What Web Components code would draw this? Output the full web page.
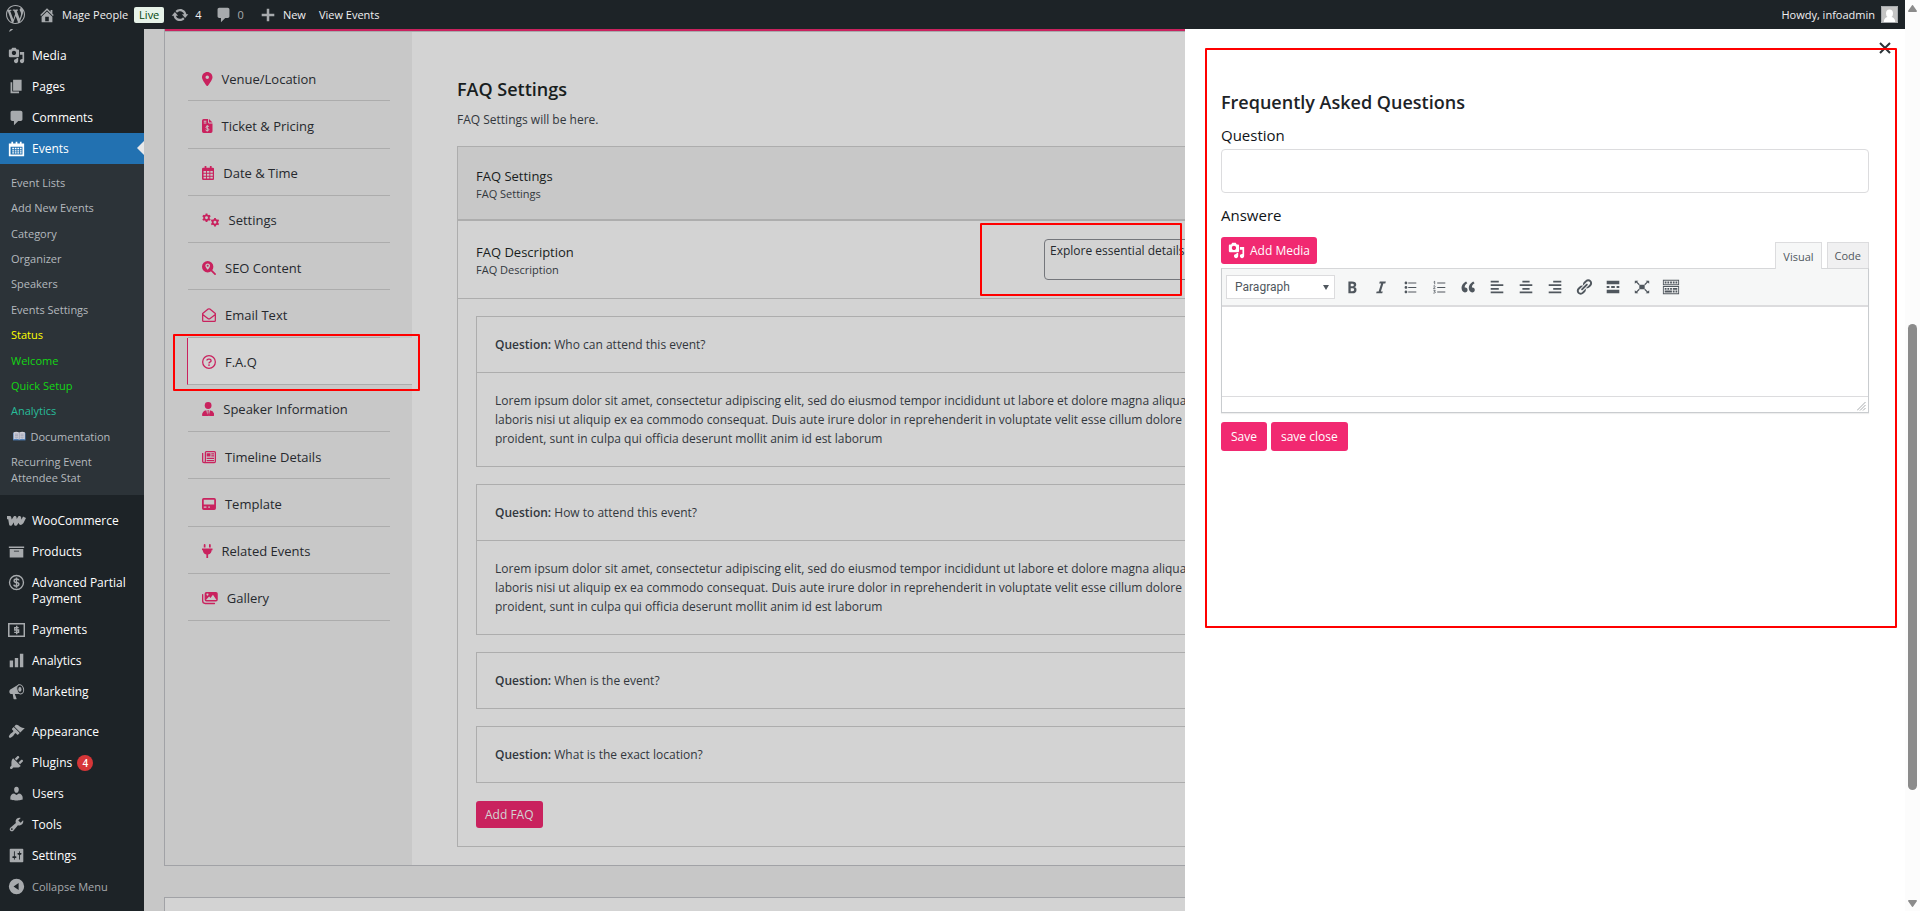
<!DOCTYPE html>
<html lang="en">
<head>
<meta charset="utf-8">
<title>Edit Event</title>
<style>
html,body{margin:0;height:100%;overflow:hidden}
body{font-family:"Open Sans","Noto Sans",sans-serif;font-size:12px;color:#1d2327;background:#c7c7c7}
</style>
</head>
<body>
<app-shell></app-shell>
<script>
const gear=(x,y,r)=>`<g fill="none" stroke="currentColor"><circle cx="${x}" cy="${y}" r="${r}" stroke-width="${r*.75}"/>${[0,60,120].map(a=>`<path transform="rotate(${a} ${x} ${y})" stroke-width="${r*.8}" d="M${x} ${y-r*1.85}V${y-r}M${x} ${y+r}V${y+r*1.85}"/>`).join('')}</g>`;
const ICONS={
wordpress:[20,20,'<path d="M20 10c0-5.51-4.49-10-10-10C4.48 0 0 4.49 0 10c0 5.52 4.48 10 10 10 5.51 0 10-4.48 10-10zM7.78 15.37L4.37 6.22c.55-.02 1.17-.08 1.17-.08.5-.06.44-1.13-.06-1.11 0 0-1.45.11-2.37.11-.18 0-.37 0-.58-.01C4.12 2.69 6.87 1.11 10 1.11c2.33 0 4.45.87 6.05 2.34-.68-.11-1.65.39-1.65 1.58 0 .74.45 1.36.9 2.1.35.61.55 1.36.55 2.46 0 1.49-1.4 5-1.4 5l-3.03-8.37c.54-.02.82-.17.82-.17.5-.05.44-1.25-.06-1.22 0 0-1.44.12-2.38.12-.87 0-2.33-.12-2.33-.12-.5-.03-.56 1.2-.06 1.22l.92.08 1.26 3.41zM17.41 10c.24-.64.74-1.87.43-4.25.7 1.29 1.05 2.71 1.05 4.25 0 3.29-1.73 6.24-4.4 7.78.97-2.59 1.94-5.2 2.92-7.78zM6.1 18.09C3.12 16.65 1.11 13.53 1.11 10c0-1.3.23-2.48.72-3.59C3.25 10.3 4.67 14.2 6.1 18.09zm4.03-6.63l2.58 6.98c-.86.29-1.76.45-2.71.45-.79 0-1.57-.11-2.29-.33.81-2.38 1.62-4.74 2.42-7.1z"/>'],
home:[20,20,'<path d="M16 8.5l1.53 1.53-1.06 1.06L10 4.6l-6.47 6.47-1.06-1.06L10 2.47l4 4v-2h2v4zm-6-2.46l6 5.99V18H4v-5.97zM12 17v-5H8v5h4z"/>'],
update:[20,20,'<path d="M10.2 3.28c3.53 0 6.43 2.61 6.92 6h2.08l-3.5 4-3.5-4h2.32c-.45-1.97-2.21-3.45-4.32-3.45-1.45 0-2.73.71-3.54 1.78L4.95 5.66C6.23 4.2 8.11 3.28 10.2 3.28zm-.4 13.44c-3.52 0-6.43-2.61-6.92-6H.8l3.5-4c1.17 1.33 2.33 2.67 3.5 4H5.48c.45 1.97 2.21 3.45 4.32 3.45 1.45 0 2.73-.71 3.54-1.78l1.71 1.95c-1.28 1.46-3.15 2.38-5.25 2.38z"/>'],
plus:[20,20,'<path d="M17 8.6v2.8h-5.6V17H8.600v-5.600H3V8.600h5.600V3h2.800v5.600z"/>'],
posts:[20,20,'<path d="M10.440 3.020l1.820-1.820 6.360 6.350-1.830 1.820c-1.050-.680-2.480-.570-3.410.360l-.750.750c-.920.930-1.040 2.350-.350 3.410l-1.830 1.820-2.410-2.410-2.800 2.790c-.420.420-3.380 2.710-3.800 2.290s1.860-3.390 2.280-3.810l2.790-2.790L4.100 9.360l1.830-1.820c1.050.690 2.480.570 3.400-.360l.750-.750c.930-.920 1.050-2.350.360-3.410z"/>'],
media:[20,20,'<path d="M13 11V4c0-.55-.45-1-1-1h-1.67L9 1H5L3.67 3H2c-.55 0-1 .45-1 1v7c0 .55.45 1 1 1h10c.55 0 1-.45 1-1zM7 4.500c1.380 0 2.500 1.120 2.500 2.500S8.380 9.500 7 9.500 4.500 8.380 4.500 7 5.620 4.500 7 4.500zM14 6h5v10.500c0 1.380-1.120 2.500-2.500 2.500S14 17.880 14 16.500s1.120-2.500 2.500-2.500c.17 0 .34.02.5.05V9h-3V6zm-4 8.050V13h2v3.500c0 1.380-1.120 2.500-2.500 2.500S7 17.880 7 16.500 8.120 14 9.500 14c.17 0 .34.02.5.05z"/>'],
pages:[20,20,'<path d="M6 15V2h10v13H6zm-1 1h8v2H3V5h2v11z"/>'],
comments:[20,20,'<path d="M5 2h10c1.100 0 2 .9 2 2v8c0 1.100-.9 2-2 2h-3l-5 5v-5H5c-1.100 0-2-.9-2-2V4c0-1.100.9-2 2-2z"/>'],
events:[20,20,'<path fill-rule="evenodd" d="M1 4h3V2h2v2h3V2h2v2h3V2h2v2h3v15H1zM3 8v9h14V8zM5 9h2v2H5zM8 9h2v2H8zM11 9h2v2h-2zM14 9h2v2h-2zM5 12h2v1.500H5zM8 12h2v1.500H8zM11 12h2v1.500h-2zM14 12h2v1.500h-2zM5 14.500h2v1.500H5zM8 14.500h2v1.500H8zM11 14.500h2v1.500h-2zM14 14.500h2v1.500h-2z"/>'],
book:[20,16,'<path fill="#4f7fb8" d="M0 3h20v12H0z"/><path fill="#cfcfd8" d="M1 2q5-1.500 9 .5 4-2 9-.5v11q-5-1.500-9 .5-4-2-9-.5z"/><path stroke="#8a8fa5" fill="none" d="M10 2.500v11M3 5h5M3 7.500h5M3 10h5M12 5h5M12 7.500h5M12 10h5"/>'],
woo:[22,12,'<path fill="none" stroke="currentColor" stroke-width="4" stroke-linejoin="round" d="M0 2h3.200l1.300 7.800L9.500 2l1 7.800L15 2l.6 5.500q.4 2.500 2.400 0L21 1.500"/>'],
products:[20,20,'<path d="M19 4v2H1V4h18zM2 7h16v10H2V7zm11 3V9H7v1h6z"/>'],
dollar:[20,20,'<circle cx="10" cy="10" r="8.200" fill="none" stroke="currentColor" stroke-width="1.600"/><path fill="none" stroke="currentColor" stroke-width="1.700" d="M13 7.500Q12.500 5.800 10 5.800 7.200 5.800 7.200 7.800T10 10t2.800 2.200T10 14.300Q7.200 14.300 6.900 12.400M10 4v12.200"/>'],
payments:[22,18,'<path fill="none" stroke="currentColor" stroke-width="2" d="M1 1h20v16H1z"/><path fill="none" stroke="currentColor" stroke-width="1.800" d="M13.800 5.900H8.700V9h4.900v3.100H8M11.200 3.500v11"/>'],
chart:[20,20,'<path d="M18 18V2h-4v16h4zm-6 0V7H8v11h4zm-6 0v-8H2v8h4z"/>'],
megaphone:[20,20,'<path d="M13 1.500L2.700 7.600C.9 8.800 1.300 13 4.200 13h1.300l1 5.500q.1.500.5.500h2.800q.5 0 .3-.5L8 13h6z"/><ellipse cx="14.400" cy="7.400" rx="3.900" ry="5.500" transform="rotate(-14 14.400 7.400)" fill="#1d2327" stroke="currentColor" stroke-width="1.200"/><ellipse cx="14" cy="7.500" rx="1.900" ry="2.800"/>'],
appearance:[20,20,'<path d="M14.480 11.060L7.410 3.990l1.500-1.500c.5-.56 2.300-.47 3.510.32 1.210.8 1.430 1.280 2.910 2.100 1.180.64 2.450 1.260 4.450.85zm-.71.71L6.700 4.700 4.930 6.470c-.39.39-.39 1.020 0 1.410l1.060 1.060c.39.39.39 1.030 0 1.420-.6.6-1.430 1.110-2.210 1.690-.35.26-.7.53-1.010.84C1.430 14.230.4 16.080 1.400 17.070c.99 1 2.840-.03 4.180-1.360.31-.31.58-.66.85-1.020.57-.78 1.080-1.610 1.690-2.210.39-.39 1.020-.39 1.410 0l1.060 1.060c.39.39 1.020.39 1.410 0z"/>'],
plugins:[20,20,'<path d="M13.110 4.360L9.870 7.600 8 5.730l3.240-3.240c.35-.34 1.050-.2 1.560.32.52.51.66 1.210.31 1.550zm-8 1.770l.91-1.120 9.010 9.010-1.190.84c-.71.71-2.630 1.160-3.820 1.160H6.140L4.900 17.260c-.59.59-1.540.59-2.120 0-.59-.58-.59-1.530 0-2.120l1.240-1.240v-3.880c0-1.130.4-3.190 1.090-3.890zm7.260 3.970l3.240-3.240c.34-.35 1.040-.21 1.550.31.52.51.66 1.210.31 1.550l-3.240 3.250z"/>'],
users:[20,20,'<path d="M10 9.250c-2.270 0-2.730-3.440-2.730-3.440C7 4.020 7.820 2 9.970 2c2.160 0 2.980 2.020 2.710 3.810 0 0-.41 3.440-2.680 3.440zm0 2.570L12.720 10c2.390 0 4.520 2.330 4.520 4.530v2.490s-3.650 1.130-7.240 1.130c-3.650 0-7.240-1.130-7.240-1.130v-2.490c0-2.250 1.940-4.480 4.470-4.480z"/>'],
tools:[20,20,'<path d="M16.680 9.770c-1.340 1.340-3.300 1.670-4.950.99l-5.410 6.520c-.99.99-2.590.99-3.580 0s-.99-2.590 0-3.570l6.520-5.420c-.68-1.650-.35-3.610.99-4.950 1.280-1.280 3.120-1.620 4.720-1.060l-2.890 2.890 2.820 2.820 2.860-2.870c.53 1.580.18 3.390-1.080 4.650zM3.810 16.210c.4.39 1.040.39 1.430 0 .4-.4.4-1.040 0-1.430-.39-.4-1.030-.4-1.430 0-.39.39-.39 1.030 0 1.430z"/>'],
settings:[20,20,'<path d="M18 17V3c0-.55-.45-1-1-1H3c-.55 0-1 .45-1 1v14c0 .55.45 1 1 1h14c.55 0 1-.45 1-1zM8 11h1c.55 0 1 .45 1 1s-.45 1-1 1H8v1.500c0 .28-.22.5-.5.5s-.5-.22-.5-.5V13H6c-.55 0-1-.45-1-1s.45-1 1-1h1V5.500c0-.28.22-.5.5-.5s.5.22.5.5V11zm5-2h-1c-.55 0-1-.45-1-1s.45-1 1-1h1V5.500c0-.28.22-.5.5-.5s.5.22.5.5V7h1c.55 0 1 .45 1 1s-.45 1-1 1h-1v5.500c0 .28-.22.5-.5.5s-.5-.22-.5-.5V9z"/>'],
collapse:[20,20,'<path fill-rule="evenodd" d="M10 1a9 9 0 1 0 0 18 9 9 0 0 0 0-18zM12.500 5.800v8.400L6.500 10z"/>'],
avatar:[17,17,'<path fill="#c4c4c4" d="M0 0h17v17H0z"/><path fill="none" stroke="#a7aaad" d="M.5.5h16v16H.5z"/><path fill="#fff" d="M5 7.500a3.500 4 0 0 1 7 0q0 2.500-1.500 3.500 3.500.8 3.700 5H2.800q.2-4.200 3.700-5Q5 10 5 7.500z"/>'],
pin:[384,512,'<path d="M215.700 499.200C267 435 384 279.400 384 192C384 86 298 0 192 0S0 86 0 192c0 87.400 117 243 168.300 307.200c12.300 15.300 35.100 15.300 47.400 0zM192 128a64 64 0 1 1 0 128 64 64 0 1 1 0-128z"/>'],
invoice:[384,512,'<path fill-rule="evenodd" d="M60 0H224V130q0 30 30 30H384V450q0 62-62 62H60Q0 512 0 450V60Q0 0 60 0zM256 0L384 128H256zM64 64v36h96V64zM64 128v36h96v-36z"/><path fill="none" stroke="#c8c8c8" stroke-width="36" d="M250 270Q150 240 140 300c0 50 110 30 110 85 0 60-110 50-120 15M192 225v230"/>'],
calendar:[448,512,'<path fill-rule="evenodd" d="M96 0h64v64h128V0h64v64h48q48 0 48 48v352q0 48-48 48H48q-48 0-48-48V112Q0 64 48 64h48zM56 180v70h90v-70zM180 180v70h90v-70zM304 180v70h90v-70zM56 286v70h90v-70zM180 286v70h90v-70zM304 286v70h90v-70zM56 392v66h90v-66zM180 392v66h90v-66zM304 392v66h90v-66z"/>'],
gears:[640,512,gear(165,175,85)+gear(475,340,85)],
seo:[512,512,'<path fill-rule="evenodd" d="M208 0a208 208 0 1 0 0 416 208 208 0 0 0 0-416zM208 90c-50 0-86 36-86 82 0 55 60 110 86 150 26-40 86-95 86-150 0-46-36-82-86-82z"/><circle cx="208" cy="176" r="38"/><path stroke="currentColor" stroke-width="64" stroke-linecap="round" d="M340 340L478 478"/>'],
mail:[512,512,'<path fill="none" stroke="currentColor" stroke-width="46" stroke-linejoin="round" d="M24 205L225 40q31-22 62 0L488 205V455q0 33-33 33H57q-33 0-33-33zM24 240L215 385q41 30 82 0L488 240"/>'],
faq:[512,512,'<circle cx="256" cy="256" r="232" fill="none" stroke="currentColor" stroke-width="46"/><path fill="none" stroke="currentColor" stroke-width="50" d="M180 205q0-55 60-55h30q62 0 62 58 0 35-45 55-31 15-31 45"/><circle cx="256" cy="366" r="32"/>'],
speaker:[448,512,'<circle cx="224" cy="128" r="124"/><path d="M160 300L200 512H28Q0 512 0 484 0 330 160 300zM288 300L248 512H420Q448 512 448 484 448 330 288 300zM194 304h60l-14 50 22 158h-76l22-158z"/>'],
news:[512,512,'<path fill="none" stroke="currentColor" stroke-width="46" stroke-linejoin="round" d="M24 110V410q0 50 50 50t50-50V90q0-34 34-34H455q34 0 34 34V420q0 40-40 40H74"/><path d="M170 120h140v120H170zM340 120h100v44H340zM340 196h100v44H340zM170 285h270v42H170zM170 365h270v42H170z"/>'],
template:[512,440,'<path fill-rule="evenodd" d="M64 0H448Q512 0 512 64V376Q512 440 448 440H64Q0 440 0 376V64Q0 0 64 0zM64 64V240H448V64zM64 310v50h100v-50zM230 310v50h60v-50z"/>'],
plug:[384,512,'<path d="M96 0q32 0 32 32v96H64V32Q64 0 96 0zM288 0q32 0 32 32v96h-64V32q0-32 32-32zM0 160H384V224H352Q350 350 224 380V512H160V380Q34 350 32 224H0z"/>'],
gallery:[576,512,'<path fill-rule="evenodd" d="M160 32H512q64 0 64 64V320q0 64-64 64H160q-64 0-64-64V96q0-64 64-64zM145 330H530L400 140 310 255 260 205zM200 90a36 36 0 1 0 .1 0z"/><path fill="none" stroke="currentColor" stroke-width="48" stroke-linecap="round" d="M24 130V360q0 96 96 96H456"/>'],
bold:[20,20,'<path d="M6 4v13h4.540c1.370 0 2.460-.33 3.260-1 .8-.66 1.200-1.580 1.200-2.770 0-.84-.17-1.510-.51-2.010s-.9-.85-1.670-1.030v-.09c.57-.1 1.020-.4 1.360-.9s.51-1.130.51-1.910c0-1.140-.39-1.980-1.170-2.500C12.750 4.260 11.500 4 9.780 4H6zm2.570 5.150V6.260h1.360c.73 0 1.270.11 1.610.32.34.22.51.58.51 1.070 0 .54-.16.92-.47 1.150s-.82.35-1.510.35h-1.500zm0 2.190h1.600c1.440 0 2.160.53 2.160 1.610 0 .6-.17 1.050-.51 1.340s-.86.43-1.570.43H8.570v-3.380z"/>'],
italic:[20,20,'<path d="M14.780 6h-2.130l-2.800 9h2.120l-.62 2H4.600l.62-2h2.140l2.800-9H8.030l.62-2h6.750z"/>'],
ul:[20,20,'<path d="M5.500 7C4.670 7 4 6.330 4 5.500 4 4.680 4.670 4 5.500 4 6.320 4 7 4.680 7 5.500 7 6.330 6.320 7 5.500 7zM8 5h9v1H8V5zm-2.500 7c-.83 0-1.500-.67-1.500-1.500C4 9.680 4.670 9 5.500 9c.82 0 1.500.68 1.500 1.500 0 .83-.68 1.500-1.500 1.500zM8 10h9v1H8v-1zm-2.500 7c-.83 0-1.500-.67-1.500-1.500 0-.82.67-1.500 1.500-1.500.82 0 1.500.68 1.500 1.500 0 .83-.68 1.500-1.500 1.500zM8 15h9v1H8v-1z"/>'],
ol:[20,20,'<path d="M8 5h9v1H8zM8 10h9v1H8zM8 15h9v1H8z"/><path fill="none" stroke="currentColor" stroke-width=".9" d="M4 4.500l1.200-.9V7M3.800 9q1.800-1 1.800.3 0 .8-1.800 2.200h2.200M3.800 13.600h2l-1 1.300q1.200 0 1.200 1t-2.300.9"/>'],
quote:[20,20,'<path d="M9.490 13.220c0-.74-.2-1.380-.61-1.900-.62-.78-1.830-.88-2.530-.72-.29-1.650 1.110-3.750 2.920-4.650L7.880 4c-2.730 1.300-5.420 4.280-4.960 8.050C3.210 14.430 4.590 16 6.540 16c.85 0 1.560-.25 2.120-.75s.83-1.180.83-2.030zm8.050 0c0-.74-.2-1.380-.61-1.900-.63-.78-1.830-.88-2.530-.72-.29-1.650 1.110-3.750 2.920-4.650L15.930 4c-2.730 1.300-5.410 4.280-4.950 8.050.29 2.380 1.660 3.950 3.610 3.950.85 0 1.560-.25 2.120-.75s.83-1.180.83-2.030z"/>'],
left:[20,20,'<path d="M12 5V3H3v2h9zm5 4V7H3v2h14zm-5 4v-2H3v2h9zm5 4v-2H3v2h14z"/>'],
center:[20,20,'<path d="M14 5V3H6v2h8zm3 4V7H3v2h14zm-3 4v-2H6v2h8zm3 4v-2H3v2h14z"/>'],
right:[20,20,'<path d="M17 5V3H8v2h9zm0 4V7H3v2h14zm0 4v-2H8v2h9zm0 4v-2H3v2h14z"/>'],
link:[20,20,'<path d="M17.740 2.760c1.680 1.690 1.680 4.410 0 6.100l-1.530 1.520c-1.120 1.120-2.700 1.470-4.140 1.090l2.620-2.610.76-.77.76-.76c.84-.84.84-2.200 0-3.040-.84-.85-2.200-.85-3.040 0l-.77.76-3.380 3.380c-.37-1.440-.02-3.020 1.100-4.140l1.520-1.530c1.690-1.680 4.420-1.680 6.100 0zM8.590 13.430l5.340-5.340c.42-.42.42-1.100 0-1.520-.44-.43-1.130-.39-1.530 0l-5.330 5.340c-.42.42-.42 1.100 0 1.520.44.43 1.130.39 1.520 0zm-.76 2.290l4.140-4.150c.38 1.440.03 3.020-1.090 4.140l-1.520 1.530c-1.690 1.680-4.410 1.680-6.100 0-1.680-1.680-1.680-4.420 0-6.100l1.530-1.520c1.120-1.120 2.700-1.470 4.140-1.100l-4.140 4.150c-.85.84-.85 2.200 0 3.050.84.84 2.200.84 3.040 0z"/>'],
more:[20,20,'<path d="M17 7V3H3v4h14zM6 11V9H3v2h3zm6 0V9H8v2h4zm5 0V9h-3v2h3zm0 6v-4H3v4h14z"/>'],
full:[20,20,'<path d="M7 7.500h6v5H7z"/><path stroke="currentColor" stroke-width="1.400" d="M3 3.500l4 4M17 3.500l-4 4M3 16.500l4-4M17 16.500l-4-4"/><path d="M2 3h4L2 6.500zM18 3h-4l4 3.500zM2 17h4l-4-3.500zM18 17h-4l4-3.500z"/>'],
sink:[20,20,'<path d="M19 2v6H1V2h18zm-1 5V3H2v4h16zM5 4v2H3V4h2zm3 0v2H6V4h2zm3 0v2H9V4h2zm3 0v2h-2V4h2zm3 0v2h-2V4h2zm2 5v9H1V9h18zm-1 8v-7H2v7h16zM5 11v2H3v-2h2zm3 0v2H6v-2h2zm3 0v2H9v-2h2zm6 0v2h-5v-2h5zm-6 3v2H3v-2h8zm3 0v2h-2v-2h2zm3 0v2h-2v-2h2z"/>'],
close:[12,12,'<path fill="none" stroke="currentColor" stroke-width="2" d="M1 1l10 10M11 1L1 11"/>'],
grip:[9,9,'<path stroke="#a7aaad" fill="none" d="M8.500 0L0 8.500M8.500 3L3 8.500M8.500 6L6 8.500"/>'],
up:[9,7,'<path d="M4.500 0Q5 0 5.500 1L9 6q0 1-1 1H1Q0 7 0 6L3.500 1Q4 0 4.500 0z"/>'],
down:[9,7,'<path d="M4.500 7Q5 7 5.500 6L9 1q0-1-1-1H1Q0 0 0 1l3.500 5Q4 7 4.500 7z"/>']
};
const define=(tag,html,after)=>customElements.define(tag,class extends HTMLElement{
  constructor(){super();this.attachShadow({mode:'open'})}
  connectedCallback(){this.shadowRoot.innerHTML=typeof html==='function'?html(this):html;after&&after(this)}
});

/* <ui-icon name size>: width follows the icon's own proportions */
define('ui-icon',el=>{
  const [w,h,body]=ICONS[el.getAttribute('name')],H=+(el.getAttribute('size')||20);
  return `<style>:host{display:inline-flex;flex:none}svg{display:block;fill:currentColor}</style><svg width="${w*H/h}" height="${H}" viewBox="0 0 ${w} ${h}" aria-hidden="true">${body}</svg>`;
});

define('pink-button',`<style>:host{display:inline-flex}
button{display:flex;align-items:center;gap:5px;border:0;border-radius:3px;background:var(--pink,#f12971);color:var(--ink,#fff);font:inherit;height:var(--h,27px);padding:0 var(--px,10px)}</style>
<button type="button"><slot></slot></button>`);

define('admin-bar',`<style>
:host{display:flex;justify-content:space-between;height:29px;background:#1d2327;color:#f0f0f1;padding:0 7px 0 6px;line-height:29px;font-size:11px;font-weight:500}
nav,a{display:flex;align-items:center}
a{color:inherit;text-decoration:none;gap:6px}
nav{gap:13px}
ui-icon{color:#a7aaad}
.live{background:#e6f2e8;color:#00450c;border-radius:2px;line-height:16px;padding:0 5px;margin-right:-6px}
.muted{color:#a7aaad}.new{margin-left:2px}
</style>
<nav><a href="#" aria-label="About WordPress"><ui-icon name="wordpress" size="19"></ui-icon></a>
<a href="#"><ui-icon name="home" size="18"></ui-icon>Mage People<span class="live">Live</span></a>
<a href="#"><ui-icon name="update" size="18"></ui-icon>4</a>
<a href="#" class="muted"><ui-icon name="comments" size="17"></ui-icon>0</a>
<a href="#" class="new"><ui-icon name="plus" size="18"></ui-icon>New</a>
<a href="#">View Events</a></nav>
<a href="#">Howdy, infoadmin<ui-icon name="avatar" size="17"></ui-icon></a>`);

define('menu-item',el=>`<style>
:host{display:block}
:host([gap]){margin-top:9px}
:host([after]){margin-top:10px}
a{display:flex;gap:7px;padding:0 12px 0 8px;color:#fff;text-decoration:none;line-height:16px;position:relative}
i{display:flex;align-items:center;justify-content:center;width:17px;height:31px;color:#a7aaad}
.t{padding:8px 0 7px;display:flex;align-items:center;gap:5px}
:host([current]) a{background:#2271b1}
:host([current]) i{color:#fff}
:host([current]) a::after{content:"";position:absolute;right:0;top:8px;border:7px solid transparent;border-left:0;border-right-color:#e8e8e9}
:host([quiet]) a{color:#a7aaad;font-size:11px}
::slotted(b){background:#d63638;border-radius:8px;width:16px;line-height:16px;text-align:center;font-size:10px;font-weight:600}
</style><a href="#"><i><ui-icon name="${el.getAttribute('icon')}" size="${el.getAttribute('size')||17}"></ui-icon></i><span class="t"><slot></slot></span></a>`);

define('admin-menu',`<style>
:host{display:block;width:144px;flex:none;background:#1d2327;overflow:hidden}
nav{margin-top:-20px}
ul{list-style:none;margin:0;padding:6px 0 4px;height:321px;background:#2c3338;display:flex;flex-direction:column;justify-content:space-between;font-size:11px}
a{display:block;padding:0 11px;line-height:25px;color:#b4b9be;text-decoration:none}
.two{line-height:16px;padding:5px 11px}
.y{color:#ff0}.g{color:#14d714}.t{color:#28bd9a}
.doc{display:flex;align-items:center;gap:5px;padding-left:13px}
</style><nav>
<menu-item icon="posts">Posts</menu-item><menu-item icon="media">Media</menu-item><menu-item icon="pages">Pages</menu-item><menu-item icon="comments">Comments</menu-item><menu-item icon="events" current>Events</menu-item>
<ul><li><a href="#">Event Lists</a><li><a href="#">Add New Events</a><li><a href="#">Category</a><li><a href="#">Organizer</a><li><a href="#">Speakers</a><li><a href="#">Events Settings</a><li><a href="#" class="y">Status</a><li><a href="#" class="g">Welcome</a><li><a href="#" class="g">Quick Setup</a><li><a href="#" class="t">Analytics</a><li><a href="#" class="doc"><ui-icon name="book" size="10"></ui-icon>Documentation</a><li><a href="#" class="two">Recurring Event<br>Attendee Stat</a></ul>
<menu-item icon="woo" size="10" after>WooCommerce</menu-item><menu-item icon="products">Products</menu-item><menu-item icon="dollar">Advanced Partial Payment</menu-item><menu-item icon="payments" size="14">Payments</menu-item><menu-item icon="chart">Analytics</menu-item><menu-item icon="megaphone">Marketing</menu-item>
<menu-item icon="appearance" gap>Appearance</menu-item><menu-item icon="plugins">Plugins <b>4</b></menu-item><menu-item icon="users">Users</menu-item><menu-item icon="tools">Tools</menu-item><menu-item icon="settings">Settings</menu-item><menu-item icon="collapse" quiet>Collapse Menu</menu-item>
</nav>`);

define('event-tabs',()=>`<style>
:host{display:block;width:247px;flex:none;background:#c8c8c8;box-sizing:border-box;padding:22px 0 0 22px;font-size:13px;color:#26292e}
ul{list-style:none;margin:0;padding:0;height:567px;display:grid;grid-auto-rows:1fr}
li{margin:0 22px 0 1px;border-bottom:1px solid #acacac;display:flex}
li.on{margin:0;border-left:1px solid #c9225e;background:#d3d3d3}
a{display:flex;align-items:center;gap:9px;color:inherit;text-decoration:none;padding:3px 0 0 14px;flex:1}
ui-icon{color:#c9225e}
</style><ul>${[['pin','Venue/Location'],['invoice','Ticket &amp; Pricing'],['calendar','Date &amp; Time'],['gears','Settings'],['seo','SEO Content'],['mail','Email Text'],['faq','F.A.Q'],['speaker','Speaker Information'],['news','Timeline Details'],['template','Template'],['plug','Related Events'],['gallery','Gallery']].map(([i,t])=>`<li class="${i==='faq'?'on':''}"><a href="#"><ui-icon name="${i}" size="${i==='template'?12:14}"></ui-icon>${t}</a></li>`).join('')}</ul>`);

define('faq-card',`<style>
:host{display:block;border:1px solid #adadad}
.q,.a{padding:18px;line-height:19px;white-space:nowrap;overflow:hidden}
.a{border-top:1px solid #adadad}
.a[hidden]{display:none}
b{font-weight:600}
</style><div class="q"><b>Question:</b> <slot name="q"></slot></div><div class="a"><slot></slot></div>`,
el=>{el.shadowRoot.querySelector('.a').hidden=!el.hasAttribute('open')});

const LOREM='Lorem ipsum dolor sit amet, consectetur adipiscing elit, sed do eiusmod tempor incididunt ut labore et dolore magna aliqua.<br>laboris nisi ut aliquip ex ea commodo consequat. Duis aute irure dolor in reprehenderit in voluptate velit esse cillum dolore eu<br>proident, sunt in culpa qui officia deserunt mollit anim id est laborum';
define('faq-settings',`<style>
:host{display:block;flex:1;min-width:0;background:#d3d3d3;padding:43px 45px 18px;color:#32373d}
h2{margin:0;font-size:18px;line-height:28px;font-weight:600;color:#181d20}
p{margin:7px 0 16px;line-height:20px}
section{border:1px solid #adadad}
.row{display:flex;align-items:flex-start;padding:21px 18px 20px;border-bottom:1px solid #adadad}
.head{background:#c8c8c8;padding:19px 18px 17px;border-bottom-width:2px}
.lbl{flex:0 0 568px;display:block}
.lbl span{display:block;font-size:13px;line-height:20px;color:#181d20}
.lbl small{display:block;font-size:11px;line-height:16px}
textarea{flex:1;min-width:0;height:41px;margin:-3px 0 -2px;box-sizing:border-box;border:1px solid #74767b;border-radius:4px;background:transparent;font:inherit;line-height:18px;color:#25292e;padding:2px 5px;resize:none;overflow:hidden}
.list{display:grid;gap:17px;padding:17px 18px 0}
.foot{display:flex;padding:18px}
pink-button{--pink:#c9225e;--ink:#d3d3d3;--px:9px}
</style>
<h2>FAQ Settings</h2><p>FAQ Settings will be here.</p>
<section>
<div class="row head"><div class="lbl"><span>FAQ Settings</span><small>FAQ Settings</small></div></div>
<div class="row"><label class="lbl" for="d"><span>FAQ Description</span><small>FAQ Description</small></label><textarea id="d">Explore essential details</textarea></div>
<div class="list">
<faq-card open><span slot="q">Who can attend this event?</span>${LOREM}</faq-card>
<faq-card open><span slot="q">How to attend this event?</span>${LOREM}</faq-card>
<faq-card><span slot="q">When is the event?</span></faq-card>
<faq-card><span slot="q">What is the exact location?</span></faq-card>
</div>
<div class="foot"><pink-button>Add FAQ</pink-button></div>
</section>`);

define('rich-editor',()=>`<style>
:host{display:block;color:#50575e}
.top{display:flex;justify-content:space-between;align-items:flex-start;height:31px}
.tabs{display:flex;gap:5px;padding-top:5px;font-size:11px}
.tabs button{font:inherit;color:#50575e;height:26px;border:1px solid #dcdcde;border-bottom:0;background:#f0f0f1;padding:0 7px}
.tabs .on{background:#f6f7f7;height:27px}
.box{border:1px solid #c9cccf;border-top-color:#d6d7d9;box-shadow:0 1px 1px #0001}
.bar{display:flex;align-items:center;gap:7px;height:36px;padding:0 4px;background:#f6f7f7;border-bottom:2px solid #dcdcde}
.bar button{border:0;background:none;padding:0;width:22px;height:22px;display:flex;align-items:center;justify-content:center;color:#50575e}
.sel{position:relative;display:flex;margin-right:-1px}
.sel::after{content:"";position:absolute;right:6px;top:10px;border:3px solid transparent;border-top:5px solid #50575e;border-bottom:0}
select{appearance:none;width:109px;height:24px;border:1px solid #dcdcde;border-radius:0;background:#fff;font:12px Roboto,"Liberation Sans",sans-serif;color:#50575e;padding:0 8px}
textarea{display:block;width:100%;height:89px;border:0;box-sizing:border-box;resize:none;background:#fff}
.status{border-top:1px solid #dcdcde;height:14px;display:flex;justify-content:flex-end;align-items:flex-end;padding:0 2px 1px}
pink-button{--px:7px;--h:27px}
</style>
<div class="top"><pink-button><ui-icon name="media" size="17"></ui-icon>Add Media</pink-button>
<div class="tabs"><button type="button" class="on">Visual</button><button type="button">Code</button></div></div>
<div class="box"><div class="bar"><span class="sel"><select aria-label="Format"><option>Paragraph</option></select></span>
${['bold','italic','ul','ol','quote','left','center','right','link','more','full','sink'].map(n=>`<button type="button" aria-label="${n}"><ui-icon name="${n}" size="18"></ui-icon></button>`).join('')}</div>
<textarea aria-label="Answere"></textarea><div class="status"><ui-icon name="grip" size="9"></ui-icon></div></div>`);

define('faq-drawer',`<style>
:host{display:block;box-sizing:border-box;background:#fff;padding:59px 36px 0;color:#101418}
h2{margin:0;font-size:18px;line-height:28px;font-weight:600;color:#1d2327}
label,.l{display:block;font-size:15px;line-height:22px;margin-top:8px}
input{display:block;box-sizing:border-box;width:100%;height:44px;margin:3px 0 11px;border:1px solid #dcdcde;border-radius:4px;font:inherit;padding:0 10px}
rich-editor{margin-top:11px}
.x{position:absolute;right:14px;top:13px;border:0;background:none;padding:0;color:#2c3338;display:flex}
.acts{display:flex;gap:4px;margin-top:9px}
pink-button{--h:29px;--px:10px}
</style><button type="button" class="x" aria-label="Close"><ui-icon name="close" size="12"></ui-icon></button>
<h2>Frequently Asked Questions</h2><label for="q">Question</label><input id="q" type="text">
<div class="l">Answere</div><rich-editor></rich-editor>
<div class="acts"><pink-button>Save</pink-button><pink-button>save close</pink-button></div>`);

/* Red call-out frame laid over the page */
define('mark-box',`<style>:host{position:absolute;box-sizing:border-box;border:2px solid #f00;border-radius:1px;pointer-events:none}</style>`);

define('scroll-track',`<style>
:host{display:flex;flex-direction:column;align-items:center;width:15px;flex:none;background:#fcfcfc;color:#8b8b8b;box-sizing:border-box;padding:5px 0 4px}
div{flex:1;display:flex;flex-direction:column;align-items:center}
div::before{content:"";flex:312}
span{flex:466;width:9px;border-radius:5px;background:#8b8b8b}
div::after{content:"";flex:110}
</style><ui-icon name="up" size="7"></ui-icon><div><span></span></div><ui-icon name="down" size="7"></ui-icon>`);

define('app-shell',`<style>
:host{display:flex;height:100vh;overflow:hidden}
.page{flex:1;min-width:0;display:flex;flex-direction:column;position:relative;overflow:hidden}
.body{flex:1;min-height:0;display:flex;position:relative}
main{flex:1;min-width:0;padding:0 20px;overflow:hidden}
.card{border:1px solid #a1a2a6;border-top:0}
.line{height:2px;background:#c9225e;border-bottom:1px solid #a9a9ac}
.cols{display:flex}
.next{margin-top:31px;border:1px solid #a1a2a6;background:#d3d3d3;height:80px}
faq-drawer{position:absolute;right:0;top:0;bottom:0;width:720px}
.m1{left:173px;top:334px;width:247px;height:57px}
.m2{left:980px;top:223px;width:202px;height:73px}
.m3{right:8px;top:48px;width:692px;height:580px}
</style>
<div class="page"><admin-bar></admin-bar>
<div class="body"><admin-menu></admin-menu>
<main><div class="card"><div class="line"></div><div class="cols"><event-tabs></event-tabs><faq-settings></faq-settings></div></div><div class="next"></div></main>
<faq-drawer></faq-drawer></div>
<mark-box class="m1"></mark-box><mark-box class="m2"></mark-box><mark-box class="m3"></mark-box></div>
<scroll-track></scroll-track>`);
</script>
</body>
</html>
